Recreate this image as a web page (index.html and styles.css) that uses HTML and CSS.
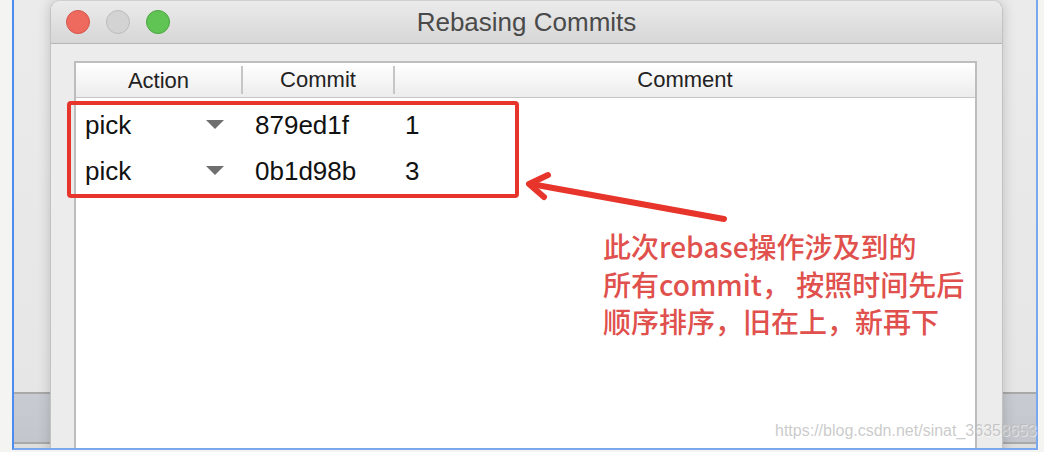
FILE: index.html
```html
<!DOCTYPE html>
<html lang="zh-CN">
<head>
<meta charset="utf-8">
<title>Rebasing Commits</title>
<link rel="stylesheet" href="styles.css">
</head>
<body>
<div class="frame">
  <div class="window">
    <div class="titlebar">
      <div class="lights">
        <span class="light red"></span>
        <span class="light gray"></span>
        <span class="light green"></span>
      </div>
      <div class="title">Rebasing Commits</div>
      <div></div>
    </div>
    <div class="content">
      <div class="table">
        <div class="thead">
          <div class="th">Action</div>
          <div class="th sep">Commit</div>
          <div class="th sep">Comment</div>
        </div>
        <div class="tbody">
          <div class="row">
            <div class="cell action"><span>pick</span><span class="tri"></span></div>
            <div class="cell commit">879ed1f</div>
            <div class="cell comment">1</div>
          </div>
          <div class="row">
            <div class="cell action"><span>pick</span><span class="tri"></span></div>
            <div class="cell commit">0b1d98b</div>
            <div class="cell comment">3</div>
          </div>
        </div>
      </div>
    </div>
  </div>
</div>

<div class="highlight"></div>
<svg class="arrow" width="1044" height="452" viewBox="0 0 1044 452">
  <g fill="none" stroke="#e8352b" stroke-width="6" stroke-linecap="round" stroke-linejoin="round">
    <path d="M724 219 L531 184"/>
    <path d="M548 175 L529 184 L544 197"/>
  </g>
</svg>
<div class="note">此次rebase操作涉及到的<br>所有commit， 按照时间先后<br>顺序排序，旧在上，新再下</div>
<div class="watermark">https://blog.csdn.net/sinat_36358653</div>
</body>
</html>
```
FILE: styles.css
```css
html, body {
  margin: 0;
  padding: 0;
}
body {
  width: 1044px;
  height: 452px;
  overflow: hidden;
  background: #f4f4f2;
  position: relative;
  font-family: "Liberation Sans", Arial, sans-serif;
}
.frame {
  margin-left: 12px;
  width: 1026px;
  height: 450px;
  box-sizing: border-box;
  border-left: 2px solid #4a8cf0;
  border-right: 2px solid #7aa8ee;
  border-bottom: 2px solid #7aa8ee;
  background: linear-gradient(to bottom, #ebebeb 0, #e6e6e6 392px, #a9a9a9 392px, #a9a9a9 394px, #c8ccd2 394px, #c3c7cd 442px, #a9a9a9 442px, #a9a9a9 444px, #dedede 444px);
  padding-left: 36px;
  display: flex;
  overflow: hidden;
}
.window {
  flex: 0 0 953px;
  height: 470px;
  box-sizing: border-box;
  background: #ececec;
  border-left: 1px solid #c2c2c2;
  border-right: 1px solid #c2c2c2;
  border-top: 1px solid #d0d0d0;
  border-radius: 10px 10px 0 0;
  box-shadow: 0 0 14px rgba(0, 0, 0, 0.18);
  display: flex;
  flex-direction: column;
}
.titlebar {
  height: 42px;
  flex: 0 0 42px;
  background: linear-gradient(to bottom, #ebebeb, #d6d6d6);
  border-bottom: 1px solid #b6b6b6;
  border-radius: 9px 9px 0 0;
  display: grid;
  grid-template-columns: 1fr auto 1fr;
  align-items: center;
}
.lights {
  display: flex;
  gap: 16px;
  padding-left: 15px;
}
.light {
  width: 22px;
  height: 22px;
  border-radius: 50%;
  border: 1px solid;
}
.light.red { background: #ee6a5f; border-color: #d5544b; }
.light.gray { background: #d3d3d3; border-color: #bcbcbc; }
.light.green { background: #5fc454; border-color: #4ca53f; }
.title {
  font-size: 26px;
  color: #4a4a4a;
  padding-top: 1px;
}
.content {
  flex: 1;
  display: flex;
  padding: 17px 25px 0 23px;
}
.table {
  flex: 1;
  background: #fff;
  border: 2px solid #bdbdbd;
  border-bottom: none;
  display: flex;
  flex-direction: column;
}
.thead {
  height: 34px;
  flex: 0 0 34px;
  background: linear-gradient(to bottom, #ffffff, #ececec);
  border-bottom: 1px solid #c6c6c6;
  display: grid;
  grid-template-columns: 165px 152px 1fr;
}
.th {
  display: flex;
  align-items: center;
  justify-content: center;
  font-size: 22px;
  color: #222;
  padding-top: 1px;
}
.th.sep {
  border-left: 2px solid #c6c6c6;
  margin: 3px 0;
  padding-top: 0;
}
.tbody {
  display: flex;
  flex-direction: column;
}
.row {
  display: grid;
  grid-template-columns: 165px 152px 1fr;
  height: 46px;
  box-sizing: border-box;
  align-items: center;
  font-size: 26px;
  color: #111;
  padding-top: 9px;
}
.cell.action {
  display: flex;
  align-items: center;
  justify-content: space-between;
  padding: 0 17px 0 9px;
}
.tri {
  width: 0;
  height: 0;
  border-left: 9px solid transparent;
  border-right: 9px solid transparent;
  border-top: 9px solid #6f6f6f;
  margin-top: -2px;
}
.cell.commit {
  padding-left: 14px;
}
.cell.comment {
  padding-left: 12px;
}
.highlight {
  position: absolute;
  left: 67px;
  top: 101px;
  width: 452px;
  height: 97px;
  box-sizing: border-box;
  border: 4px solid #e8352b;
  border-radius: 4px;
}
.arrow {
  position: absolute;
  left: 0;
  top: 0;
}
.note {
  position: absolute;
  left: 603px;
  top: 228px;
  font-family: "Noto Sans CJK SC", "Noto Sans", sans-serif;
  font-size: 28px;
  line-height: 37.5px;
  color: #e0504c;
  font-weight: 500;
  white-space: nowrap;
}
.watermark {
  position: absolute;
  left: 775px;
  top: 422px;
  font-size: 16px;
  color: rgba(185, 185, 185, 0.75);
  text-shadow: 1px 1px 0 rgba(255, 255, 255, 0.5);
  white-space: nowrap;
}
```
